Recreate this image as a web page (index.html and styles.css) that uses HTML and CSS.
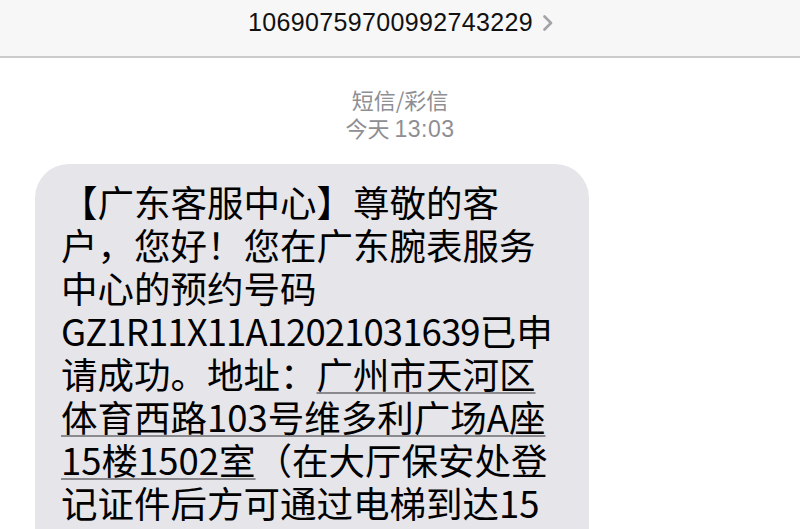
FILE: index.html
```html
<!DOCTYPE html>
<html lang="zh-CN">
<head>
<meta charset="utf-8">
<title>短信</title>
<link rel="stylesheet" href="styles.css">
</head>
<body>
<div class="screen">
  <header class="topbar">
    <span class="number">10690759700992743229</span>
    <svg class="chevron" width="12" height="16" viewBox="0 0 12 16"><path d="M2.5 1.5 L9 8 L2.5 14.5" fill="none" stroke="#a3a3a8" stroke-width="2.6" stroke-linecap="round" stroke-linejoin="round"/></svg>
  </header>
  <main class="thread">
    <div class="meta">
      <div class="kind">短信/彩信</div>
      <div class="time">今天 <span class="clock">13:03</span></div>
    </div>
    <div class="bubble">
      <p class="msg"><span class="ln">【广东客服中心】尊敬的客</span><span class="ln">户，您好！您在广东腕表服务</span><span class="ln">中心的预约号码</span><span class="ln"><span class="code">GZ1R11X11A12021031639</span>已申</span><span class="ln">请成功。地址：<u class="link">广州市天河区</u></span><span class="ln"><u class="link">体育西路103号维多利广场A座</u></span><span class="ln"><u class="link">15楼1502室</u>（在大厅保安处登</span><span class="ln">记证件后方可通过电梯到达15</span></p>
    </div>
  </main>
</div>
</body>
</html>
```
FILE: styles.css
```css
html, body {
  margin: 0;
  padding: 0;
  background: #ffffff;
  overflow: hidden;
}
.screen {
  width: 800px;
  height: 529px;
  overflow: hidden;
  font-family: "Noto Sans CJK SC", "Noto Sans", sans-serif;
}
.topbar {
  height: 56px;
  background: #f7f7f7;
  border-bottom: 2px solid #cbcbcb;
  display: flex;
  align-items: flex-start;
  justify-content: center;
  gap: 9px;
  padding-left: 2px;
  box-sizing: content-box;
}
.number {
  font-family: "Liberation Sans", Arial, sans-serif;
  font-size: 25px;
  letter-spacing: 0.35px;
  color: #111;
  line-height: 25px;
  margin-top: 10px;
}
.chevron {
  margin-top: 15px;
}
.thread {
  display: flex;
  flex-direction: column;
  padding-top: 27px;
}
.meta {
  text-align: center;
  color: #8e8e93;
  font-size: 22px;
  line-height: 28px;
}
.clock {
  font-family: "Liberation Sans", Arial, sans-serif;
  font-size: 23px;
  letter-spacing: 0.5px;
}
.bubble {
  margin-top: 21px;
  margin-left: 35px;
  width: 554px;
  background: #e5e5ea;
  border-radius: 34px;
  padding: 16px 0 60px 26px;
  box-sizing: border-box;
}
.msg {
  margin: 0;
  font-size: 36.5px;
  line-height: 43px;
  color: #000;
  white-space: nowrap;
}
.ln {
  display: block;
}
.code {
  letter-spacing: -0.9px;
}
.link {
  text-decoration: underline;
  text-decoration-color: #8a8a8e;
  text-decoration-thickness: 1.5px;
  text-underline-offset: 3px;
}
```
